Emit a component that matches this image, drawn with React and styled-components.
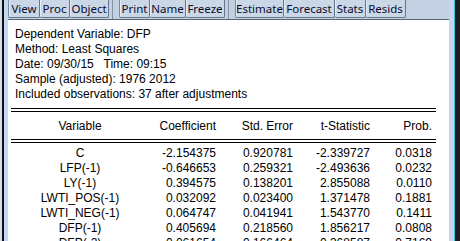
import styled, { createGlobalStyle } from 'styled-components'

const GlobalStyle = createGlobalStyle`
  html, body {
    margin: 0;
    padding: 0;
    overflow: hidden;
    background: #c5d6ee;
  }
`

const buttonGroups = [
    [['View', 32], ['Proc', 30], ['Object', 39]],
    [['Print', 31], ['Name', 36], ['Freeze', 39]],
    [['Estimate', 49], ['Forecast', 51], ['Stats', 31], ['Resids', 40]],
]

const info = [
    'Dependent Variable: DFP',
    'Method: Least Squares',
    'Date: 09/30/15   Time: 09:15',
    'Sample (adjusted): 1976 2012',
    'Included observations: 37 after adjustments',
]

const headers = ['Variable', 'Coefficient', 'Std. Error', 't-Statistic', 'Prob.']

const rows = [
    ['C', '-2.154375', '0.920781', '-2.339727', '0.0318'],
    ['LFP(-1)', '-0.646653', '0.259321', '-2.493636', '0.0232'],
    ['LY(-1)', '0.394575', '0.138201', '2.855088', '0.0110'],
    ['LWTI_POS(-1)', '0.032092', '0.023400', '1.371478', '0.1881'],
    ['LWTI_NEG(-1)', '0.064747', '0.041941', '1.543770', '0.1411'],
    ['DFP(-1)', '0.405694', '0.218560', '1.856217', '0.0808'],
    ['DFP(-2)', '0.061654', '0.166464', '0.368587', '0.7169'],
]

function App() {
    return (
        <>
            <GlobalStyle />
            <Frame>
                <LeftEdge />
                <Main>
                    <Toolbar>
                        {buttonGroups.map((group, gi) => (
                            <Group key={gi}>
                                {group.map(([label, w]) => (
                                    <ToolButton key={label} $w={w}>{label}</ToolButton>
                                ))}
                            </Group>
                        ))}
                    </Toolbar>
                    <Content>
                        <Info>
                            {info.map((line) => (
                                <div key={line}>{line}</div>
                            ))}
                        </Info>
                        <Table>
                            <HeadRow>
                                {headers.map((h, i) => (
                                    <Cell key={h} $first={i === 0}>{h}</Cell>
                                ))}
                            </HeadRow>
                            <Body>
                                {rows.map((r) => (
                                    <Row key={r[0]}>
                                        {r.map((v, i) => (
                                            <Cell key={i} $first={i === 0}>{v}</Cell>
                                        ))}
                                    </Row>
                                ))}
                            </Body>
                        </Table>
                    </Content>
                </Main>
                <RightEdge />
            </Frame>
        </>
    )
}

const Frame = styled.div`
    display: flex;
    width: 460px;
    height: 241px;
    overflow: hidden;
`

const LeftEdge = styled.div`
    width: 6px;
    flex-shrink: 0;
    background: #c6d8f1;
    border-left: 2px solid #d2deec;
    box-shadow: inset 2px 0 0 #101010;
`

const RightEdge = styled.div`
    width: 6px;
    flex-shrink: 0;
    background: #c4d5ed;
    border-right: 5px solid #1c1c1c;
    box-shadow: inset -1px 0 0 #3bbfd0;
`

const Main = styled.div`
    flex: 1;
    display: flex;
    flex-direction: column;
    background: #fff;
    min-width: 0;
`

const Toolbar = styled.div`
    display: flex;
    gap: 6px;
    height: 19px;
    background: #c2d0e2;
    border-bottom: 1px solid #56677b;
    flex-shrink: 0;
`

const Group = styled.div`
    display: flex;
    padding-right: 3px;
    border-right: 1px solid #8192a6;
    &:last-child {
        border-right: none;
    }
`

const ToolButton = styled.div`
    width: ${(p) => p.$w}px;
    height: 18px;
    box-sizing: border-box;
    display: flex;
    align-items: center;
    justify-content: center;
    font-family: "Noto Sans", sans-serif;
    font-size: 11.5px;
    color: #0c0c30;
    background: #cad7e7;
    border: 1px solid #66778b;
    border-top: none;
    border-left-color: #7a8a9d;
    box-shadow: inset 1px 0 0 #e4ecf5;
    border-radius: 0 0 2px 2px;
    & + & {
        border-left: none;
    }
`

const Content = styled.div`
    flex: 1;
    padding: 7px 0 0 3px;
    font-family: "Liberation Sans", Arial, sans-serif;
    font-size: 12px;
    color: #000;
`

const Info = styled.div`
    padding-left: 4px;
    line-height: 15px;
    white-space: pre;
`

const Table = styled.div`
    width: 425px;
    margin-top: 6px;
    border-top: 4px double #000;
`

const columns = '138px 67px 77px 77px 62px'

const HeadRow = styled.div`
    display: grid;
    grid-template-columns: ${columns};
    height: 27px;
    align-items: center;
    border-bottom: 4px double #000;
`

const Body = styled.div`
    padding-top: 3px;
`

const Row = styled.div`
    display: grid;
    grid-template-columns: ${columns};
    line-height: 15px;
`

const Cell = styled.div`
    text-align: ${(p) => (p.$first ? 'center' : 'right')};
    white-space: nowrap;
`

export default App
